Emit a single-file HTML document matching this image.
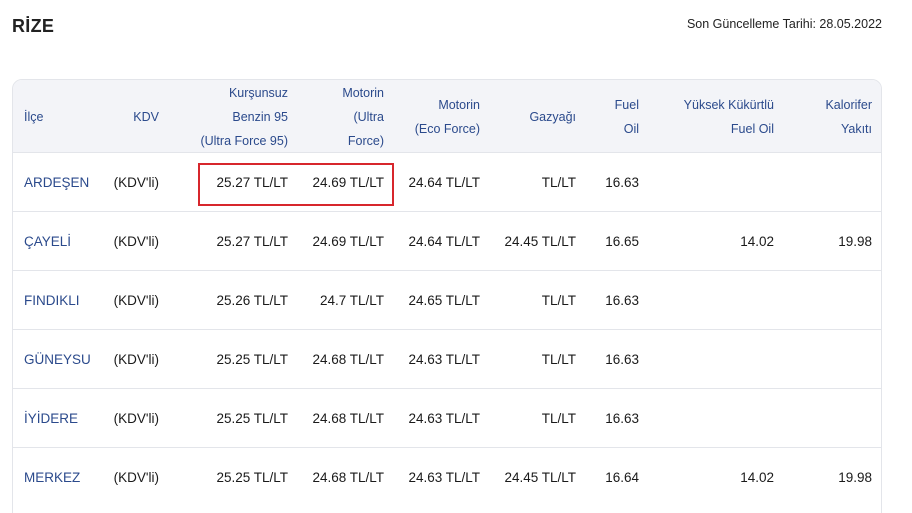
<!DOCTYPE html>
<html><head><meta charset="utf-8"><style>
html,body{margin:0;width:912px;height:513px;overflow:hidden}
body{background:#fff;font-family:"Liberation Sans",sans-serif;position:relative}
.a{position:absolute;white-space:nowrap}
.t{left:12px;top:16px;font-size:18px;font-weight:bold;color:#222;letter-spacing:0.3px}
.d{right:30px;top:17px;font-size:12.5px;color:#222}
.box{position:absolute;left:12px;top:79px;width:868px;height:460px;border:1px solid #e3e5ea;border-radius:10px;overflow:hidden}
.hd{position:absolute;left:0;top:0;width:100%;height:72px;background:#f3f4f8}
.h{position:absolute;font-size:12.5px;color:#2b4a8c;line-height:24px;text-align:right;white-space:nowrap;top:1px}
.row{position:absolute;left:0;width:100%;height:58px;border-top:1px solid #e3e5ea}
.c{position:absolute;font-size:13.5px;color:#1a1a1a;white-space:nowrap;text-align:right;top:22px}
.n{color:#2b4a8c;text-align:left}
.red{position:absolute;left:198px;top:163px;width:192px;height:39px;border:2px solid #d7262c}
</style></head><body>
<div class="a t">RİZE</div>
<div class="a d">Son Güncelleme Tarihi: 28.05.2022</div>
<div class="box">
<div class="hd"></div>
<div class="h" style="left:11px;margin-top:24px;text-align:left">İlçe</div>
<div class="h" style="right:722px;margin-top:24px">KDV</div>
<div class="h" style="right:593px">Kurşunsuz<br>Benzin 95<br>(Ultra Force 95)</div>
<div class="h" style="right:497px">Motorin<br>(Ultra<br>Force)</div>
<div class="h" style="right:401px;margin-top:12px">Motorin<br>(Eco Force)</div>
<div class="h" style="right:305px;margin-top:24px">Gazyağı</div>
<div class="h" style="right:242px;margin-top:12px">Fuel<br>Oil</div>
<div class="h" style="right:107px;margin-top:12px">Yüksek Kükürtlü<br>Fuel Oil</div>
<div class="h" style="right:9px;margin-top:12px">Kalorifer<br>Yakıtı</div>

<div class="row" style="top:72px"><div class="c n" style="left:11px">ARDEŞEN</div><div class="c" style="right:722px">(KDV'li)</div><div class="c" style="right:593px">25.27 TL/LT</div><div class="c" style="right:497px">24.69 TL/LT</div><div class="c" style="right:401px">24.64 TL/LT</div><div class="c" style="right:305px">TL/LT</div><div class="c" style="right:242px">16.63</div></div>
<div class="row" style="top:131px"><div class="c n" style="left:11px">ÇAYELİ</div><div class="c" style="right:722px">(KDV'li)</div><div class="c" style="right:593px">25.27 TL/LT</div><div class="c" style="right:497px">24.69 TL/LT</div><div class="c" style="right:401px">24.64 TL/LT</div><div class="c" style="right:305px">24.45 TL/LT</div><div class="c" style="right:242px">16.65</div><div class="c" style="right:107px">14.02</div><div class="c" style="right:9px">19.98</div></div>
<div class="row" style="top:190px"><div class="c n" style="left:11px">FINDIKLI</div><div class="c" style="right:722px">(KDV'li)</div><div class="c" style="right:593px">25.26 TL/LT</div><div class="c" style="right:497px">24.7 TL/LT</div><div class="c" style="right:401px">24.65 TL/LT</div><div class="c" style="right:305px">TL/LT</div><div class="c" style="right:242px">16.63</div></div>
<div class="row" style="top:249px"><div class="c n" style="left:11px">GÜNEYSU</div><div class="c" style="right:722px">(KDV'li)</div><div class="c" style="right:593px">25.25 TL/LT</div><div class="c" style="right:497px">24.68 TL/LT</div><div class="c" style="right:401px">24.63 TL/LT</div><div class="c" style="right:305px">TL/LT</div><div class="c" style="right:242px">16.63</div></div>
<div class="row" style="top:308px"><div class="c n" style="left:11px">İYİDERE</div><div class="c" style="right:722px">(KDV'li)</div><div class="c" style="right:593px">25.25 TL/LT</div><div class="c" style="right:497px">24.68 TL/LT</div><div class="c" style="right:401px">24.63 TL/LT</div><div class="c" style="right:305px">TL/LT</div><div class="c" style="right:242px">16.63</div></div>
<div class="row" style="top:367px"><div class="c n" style="left:11px">MERKEZ</div><div class="c" style="right:722px">(KDV'li)</div><div class="c" style="right:593px">25.25 TL/LT</div><div class="c" style="right:497px">24.68 TL/LT</div><div class="c" style="right:401px">24.63 TL/LT</div><div class="c" style="right:305px">24.45 TL/LT</div><div class="c" style="right:242px">16.64</div><div class="c" style="right:107px">14.02</div><div class="c" style="right:9px">19.98</div></div>
</div>
<div class="red"></div>
</body></html>
